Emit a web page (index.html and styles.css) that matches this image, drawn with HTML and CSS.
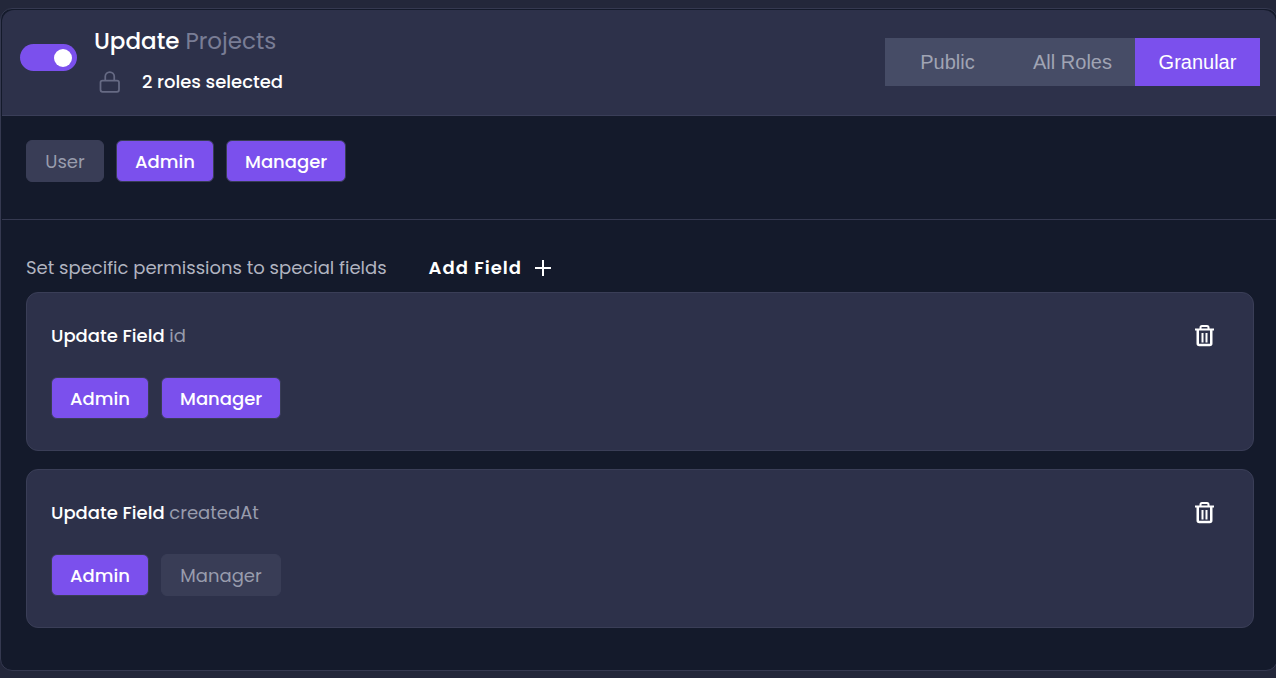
FILE: index.html
```html
<!DOCTYPE html>
<html lang="en">
<head>
<meta charset="utf-8">
<meta name="viewport" content="width=device-width, initial-scale=1">
<title>Update Projects permissions</title>
<link rel="stylesheet" href="styles.css">
</head>
<body>
<main class="panel">
  <header class="panel-header">
    <input class="switch" type="checkbox" role="switch" aria-label="Update Projects" checked>
    <div class="summary">
      <h1 class="title">Update <span class="title-muted">Projects</span></h1>
      <div class="status">
        <svg class="lock" viewBox="0 0 22 22" fill="none" stroke="currentColor" stroke-width="1.75" aria-hidden="true">
          <rect x="1.5" y="9.5" width="18.5" height="11.25" rx="2"/>
          <path d="M6.25 9V5.5a4.5 4.5 0 0 1 9 0V9"/>
        </svg>
        <span>2 roles selected</span>
      </div>
    </div>
    <div class="segments" role="group" aria-label="Access level">
      <button class="segment" type="button">Public</button>
      <button class="segment" type="button">All Roles</button>
      <button class="segment segment-active" type="button" aria-pressed="true">Granular</button>
    </div>
  </header>
  <section class="roles chips" aria-label="Roles">
    <button class="chip" type="button">User</button>
    <button class="chip chip-admin chip-on" type="button">Admin</button>
    <button class="chip chip-manager chip-on" type="button">Manager</button>
  </section>
  <section class="fields">
    <div class="fields-bar">
      <p class="hint">Set specific permissions to special fields</p>
      <button class="add" type="button">Add Field
        <svg class="plus" viewBox="0 0 18 18" stroke="currentColor" stroke-width="2" aria-hidden="true"><path d="M9 1v16M1 9h16"/></svg>
      </button>
    </div>
    <article class="card">
      <div class="card-top">
        <h2 class="card-title">Update Field <span class="card-muted">id</span></h2>
        <button class="trash" type="button" aria-label="Delete id">
          <svg viewBox="0 0 20 24" fill="none" stroke="currentColor" stroke-width="2" aria-hidden="true">
            <path d="M0 5.5h19M5.5 5V3.5A1.5 1.5 0 0 1 7 2h5a1.5 1.5 0 0 1 1.5 1.5V5"/>
            <path d="M2.75 5.5v14a1.5 1.5 0 0 0 1.500 1.500h10.500a1.500 1.500 0 0 0 1.500-1.500v-14" stroke-width="2.500"/>
            <path d="M7.500 9v9.500M11.500 9v9.500"/>
          </svg>
        </button>
      </div>
      <div class="chips">
        <button class="chip chip-admin chip-on" type="button">Admin</button>
        <button class="chip chip-manager chip-on" type="button">Manager</button>
      </div>
    </article>
    <article class="card">
      <div class="card-top">
        <h2 class="card-title">Update Field <span class="card-muted">createdAt</span></h2>
        <button class="trash" type="button" aria-label="Delete createdAt">
          <svg viewBox="0 0 20 24" fill="none" stroke="currentColor" stroke-width="2" aria-hidden="true">
            <path d="M0 5.5h19M5.5 5V3.5A1.5 1.5 0 0 1 7 2h5a1.5 1.5 0 0 1 1.5 1.5V5"/>
            <path d="M2.75 5.5v14a1.5 1.5 0 0 0 1.500 1.500h10.500a1.500 1.500 0 0 0 1.500-1.500v-14" stroke-width="2.500"/>
            <path d="M7.500 9v9.500M11.500 9v9.500"/>
          </svg>
        </button>
      </div>
      <div class="chips">
        <button class="chip chip-admin chip-on" type="button">Admin</button>
        <button class="chip chip-manager" type="button">Manager</button>
      </div>
    </article>
  </section>
</main>
</body>
</html>
```

FILE: styles.css
```css
* { box-sizing: border-box; }

body {
  margin: 0;
  padding: 8px 0 7px;
  overflow-x: hidden;
  background: #23273a;
  color: #fff;
  font: 400 18px/28px Poppins, Inter, sans-serif;
}

button {
  margin: 0;
  border: 0;
  background: none;
  color: inherit;
  font: inherit;
  cursor: pointer;
}

h1, h2, p { margin: 0; }

.panel {
  margin-right: -2px;
  padding: 1px;
  border: 1px solid #353950;
  border-radius: 12px;
  background: #141a2b;
}

.panel-header {
  display: flex;
  align-items: flex-start;
  gap: 17px;
  min-height: 106px;
  padding: 12px 16px 18px 18px;
  border-bottom: 1px solid #3a3e58;
  border-radius: 12px 12px 0 0;
  background: #2d314a;
}

.switch {
  appearance: none;
  display: flex;
  align-items: center;
  justify-content: flex-end;
  width: 57px;
  height: 27px;
  margin: 22px 0 0;
  padding: 5px;
  border-radius: 14px;
  background: #7b50ed;
}

.switch::before {
  content: "";
  width: 18px;
  height: 18px;
  border-radius: 50%;
  background: #fff;
}

.switch:not(:checked) { justify-content: flex-start; background: #464c66; }

.summary { flex: 1; }

.title { font-size: 23px; font-weight: 500; line-height: 38px; }
.title-muted { color: #797d95; font-weight: 400; }

.status {
  display: flex;
  align-items: center;
  gap: 21px;
  padding: 8px 0 0 5px;
  font-weight: 500;
}

.lock { width: 22px; height: 22px; color: #666a84; }

.segments {
  display: grid;
  grid-template-columns: repeat(3, 125px);
  margin-top: 16px;
  background: #464c66;
}

.segment {
  height: 48px;
  padding: 0;
  color: #a0a4b4;
  font: 20px/24px Arial, "Liberation Sans", sans-serif;
}

.segment-active { background: #7b50ed; color: #fff; }

.chips { display: flex; gap: 12px; }

.chip {
  min-width: 78px;
  padding: 7px 18px 5px;
  border: 1px solid #393d56;
  border-radius: 6px;
  background: #393d56;
  color: #989cad;
}

.chip-admin { min-width: 98px; }
.chip-manager { min-width: 120px; }
.chip-on { background: #7b50ed; color: #fff; font-weight: 500; }

.roles { padding: 24px 24px 37px; border-bottom: 1px solid #353950; }

.fields { padding: 34px 22px 41px 24px; }

.fields-bar { display: flex; align-items: center; gap: 42px; margin-bottom: 10px; }

.hint { color: #b1b4c0; }

.add {
  display: flex;
  align-items: center;
  gap: 12px;
  padding: 0;
  font-weight: 600;
  letter-spacing: 1px;
}

.plus { width: 18px; height: 18px; }

.card {
  padding: 29px 24px 31px;
  border: 1px solid #3a3e57;
  border-radius: 12px;
  background: #2d314a;
}

.card + .card { margin-top: 18px; }

.card-top {
  display: flex;
  align-items: center;
  justify-content: space-between;
  margin-bottom: 27px;
  padding-right: 14px;
}

.card-title { font-size: 18px; font-weight: 500; line-height: 28px; }
.card-muted { color: #989cad; font-weight: 400; }

.trash { display: flex; padding: 0; }
.trash svg { width: 20px; height: 24px; overflow: visible; }
```
